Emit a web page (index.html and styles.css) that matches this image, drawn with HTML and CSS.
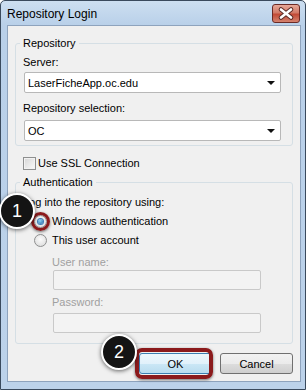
FILE: index.html
```html
<!DOCTYPE html>
<html lang="en">

<head>
    <meta charset="UTF-8">
    <meta name="viewport" content="width=device-width, initial-scale=1.0">
    <title>Repository Login</title>
    <link rel="stylesheet" href="styles.css">
</head>

<body>
    <div class="window">
        <div class="titlebar">
            <span class="title">Repository Login</span>
            <span class="close-btn">
                <svg width="28" height="19" viewBox="0 0 28 19">
                    <path d="M9 5.5 L19 13.5 M19 5.5 L9 13.5" stroke="#5b2b26" stroke-width="4.6" stroke-linecap="round" fill="none" />
                    <path d="M9 5.5 L19 13.5 M19 5.5 L9 13.5" stroke="#ffffff" stroke-width="2.6" stroke-linecap="round" fill="none" />
                </svg>
            </span>
        </div>

        <div class="client">
            <fieldset class="group group-repo">
                <legend>Repository</legend>
                <div class="label first">Server:</div>
                <div class="combo">
                    <span class="combo-text">LaserFicheApp.oc.edu</span>
                    <span class="arrow"></span>
                </div>
                <div class="label label-2">Repository selection:</div>
                <div class="combo combo-2">
                    <span class="combo-text">OC</span>
                    <span class="arrow"></span>
                </div>
            </fieldset>

            <div class="check-row">
                <span class="checkbox"></span>
                <span>Use SSL Connection</span>
            </div>

            <fieldset class="group group-auth">
                <legend>Authentication</legend>
                <div class="label first-auth">Log into the repository using:</div>
                <div class="radio-row">
                    <span class="radio checked"></span>
                    <span>Windows authentication</span>
                </div>
                <div class="radio-row">
                    <span class="radio"></span>
                    <span>This user account</span>
                </div>
                <div class="sub-fields">
                    <div class="label disabled user-label">User name:</div>
                    <div class="textbox"></div>
                    <div class="label disabled pass-label">Password:</div>
                    <div class="textbox pass-box"></div>
                </div>
            </fieldset>

            <div class="buttons">
                <button class="btn btn-default">OK</button>
                <button class="btn">Cancel</button>
            </div>
        </div>

        <!-- tutorial callouts -->
        <div class="ring ring-radio"></div>
        <div class="callout callout-1">1</div>
        <div class="ring ring-ok"></div>
        <div class="callout callout-2">2</div>
    </div>
</body>

</html>
```

FILE: styles.css
```css
body {
    margin: 0;
    font-family: "Liberation Sans", Arial, sans-serif;
    font-size: 11px;
    color: #000;
    overflow: hidden;
}

.window {
    position: relative;
    width: 306px;
    height: 390px;
    box-sizing: border-box;
    border: 1px solid #3a4a5d;
    border-radius: 5px 5px 0 0;
    background: linear-gradient(#cddff1, #b9d0e9 24px, #bcd2ea);
    display: flex;
    flex-direction: column;
    padding-bottom: 7px;
}

.titlebar {
    height: 24px;
    display: flex;
    align-items: center;
    justify-content: space-between;
    padding: 0 5px 0 6px;
}

.title {
    font-size: 12px;
    line-height: 14px;
    padding-top: 1px;
}

.close-btn {
    width: 28px;
    height: 19px;
    box-sizing: border-box;
    border: 1px solid #6b2a25;
    border-radius: 3px;
    background: linear-gradient(#e7a898, #d27a68 45%, #c24a36 55%, #d4826e);
    display: flex;
    align-items: center;
    justify-content: center;
    margin-top: 1px;
}

.close-btn svg {
    display: block;
    margin: -1px;
}

.client {
    flex: 1;
    margin: 0 4px 0 6px;
    background-color: #f0f0f0;
    border: 1px solid #8ea3bd;
    display: flex;
    flex-direction: column;
}

.group {
    margin: 0 7px;
    padding: 0 7px 4px;
    border: 1px solid #d5dfe5;
    border-radius: 3px;
    min-width: 0;
}

.group legend {
    padding: 0 3px;
    margin-left: -3px;
    line-height: 14px;
}

.group-repo {
    margin-top: 10px;
}

.group-auth {
    margin-top: 5px;
    padding-bottom: 10px;
}

.label {
    line-height: 14px;
}

.first {
    margin-top: 5px;
}

.label-2 {
    margin-top: 8px;
}

.combo {
    margin: 3px 0 0 1px;
    width: 257px;
    height: 21px;
    box-sizing: border-box;
    border: 1px solid #b8b8b8;
    border-radius: 2px;
    background-color: white;
    display: flex;
    align-items: center;
    justify-content: space-between;
    padding: 0 5px 0 3px;
}

.combo-2 {
    margin-top: 5px;
}

.arrow {
    width: 0;
    height: 0;
    border-left: 4px solid transparent;
    border-right: 4px solid transparent;
    border-top: 4px solid #111;
    margin-top: 1px;
}

.check-row {
    margin: 10px 0 0 15px;
    display: flex;
    align-items: center;
    line-height: 14px;
}

.checkbox {
    width: 13px;
    height: 13px;
    box-sizing: border-box;
    border: 1px solid #8e8f8f;
    background: linear-gradient(135deg, #d6d6d6, #fafafa);
    box-shadow: inset 0 0 0 1px #f2f2f2;
    margin-right: 2px;
}

.first-auth {
    margin-top: 6px;
}

.radio-row {
    margin: 5px 0 0 11px;
    display: flex;
    align-items: center;
    line-height: 14px;
}

.radio {
    width: 13px;
    height: 13px;
    box-sizing: border-box;
    border: 1px solid #8e8f8f;
    border-radius: 50%;
    background: radial-gradient(circle at 50% 40%, #fbfbfb, #d8d8d8);
    margin-right: 5px;
    display: flex;
    align-items: center;
    justify-content: center;
}

.radio.checked::after {
    content: "";
    width: 5px;
    height: 5px;
    border-radius: 50%;
    background: radial-gradient(circle at 40% 35%, #8fd6f6, #1a5fa3);
    box-shadow: 0 0 0 1px #3d7cb8;
}

.sub-fields {
    padding-left: 29px;
}

.disabled {
    color: #a0a0a0;
}

.user-label {
    margin-top: 8px;
}

.pass-label {
    margin-top: 5px;
}

.textbox {
    margin: 1px 0 0 1px;
    width: 208px;
    height: 20px;
    box-sizing: border-box;
    border: 1px solid #c9c9c9;
    border-radius: 2px;
    background-color: #f3f3f3;
}

.pass-box {
    margin-top: 4px;
}

.buttons {
    margin-top: 9px;
    padding-right: 7px;
    display: flex;
    justify-content: flex-end;
    gap: 8px;
}

.btn {
    width: 73px;
    height: 21px;
    padding: 0;
    border: 1px solid #707070;
    border-radius: 3px;
    background: linear-gradient(#f2f2f2, #ebebeb 50%, #dddddd 51%, #cfcfcf);
    font-family: "Liberation Sans", Arial, sans-serif;
    font-size: 11px;
    color: #000;
}

.btn-default {
    border-color: #3c7fb1;
    background: linear-gradient(#eef7fc, #e1f1fb 50%, #cbe7f6 51%, #b9dcef);
}

.ring {
    position: absolute;
    box-sizing: border-box;
    border: 3px solid #8b1a1c;
    box-shadow: 0 1px 3px rgba(0, 0, 0, 0.55);
}

.ring-radio {
    left: 30px;
    top: 211px;
    width: 19px;
    height: 19px;
    border-radius: 50%;
}

.ring-ok {
    left: 134px;
    top: 347px;
    width: 78px;
    height: 31px;
    border-width: 4px;
    border-radius: 7px;
}

.callout {
    position: absolute;
    width: 36px;
    height: 36px;
    box-sizing: border-box;
    border: 2px solid white;
    border-radius: 50%;
    background-color: #141414;
    box-shadow: 0 1px 4px rgba(0, 0, 0, 0.6);
    color: white;
    font-size: 18px;
    display: flex;
    align-items: center;
    justify-content: center;
}

.callout-1 {
    left: -2px;
    top: 192px;
}

.callout-2 {
    left: 100px;
    top: 333px;
}
```
